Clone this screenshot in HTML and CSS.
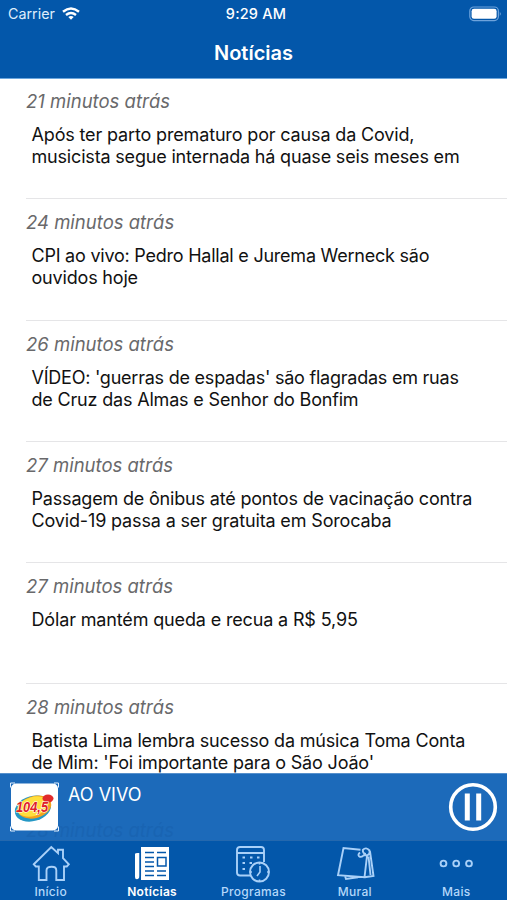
FILE: index.html
```html
<!DOCTYPE html>
<html lang="pt-BR">
<head>
<meta charset="utf-8">
<title>Notícias</title>
<link rel="stylesheet" href="styles.css">
</head>
<body>
<div class="app">
  <header class="header">
    <div class="status">
      <div class="carrier"><span>Carrier</span>
        <svg width="18" height="13" viewBox="0 0 18 13"><g fill="none" stroke="#fff" stroke-width="2.4"><path d="M1 4.7Q9-1.9 17 4.7"/><path d="M4 8Q9 4 14 8"/></g><path d="M6.3 10Q9 8 11.7 10L9 12.8z" fill="#fff"/></svg>
      </div>
      <div class="clock">9:29 AM</div>
      <svg class="battery" width="33" height="16" viewBox="0 0 33 16"><rect x=".8" y="1" width="28.6" height="13.6" rx="4" fill="none" stroke="#6ea3dc" stroke-width="1.2"/><rect x="2.6" y="2.8" width="25" height="10" rx="2.4" fill="#fff"/><path d="M30.8 5.5q1.8 2.2 0 4.4z" fill="#7fb0e4"/></svg>
    </div>
    <h1 class="title">Notícias</h1>
  </header>
  <main class="feed">
    <article class="item"><time class="time">21 minutos atrás</time><p class="text loose">Após ter parto prematuro por causa da Covid,<br><span class="snug">musicista segue internada há quase seis meses em</span></p></article>
    <article class="item"><time class="time">24 minutos atrás</time><p class="text"><span class="tight">CPI ao vivo: Pedro Hallal e Jurema Werneck são</span><br>ouvidos hoje</p></article>
    <article class="item"><time class="time">26 minutos atrás</time><p class="text"><span class="tight">VÍDEO: 'guerras de espadas' são flagradas em ruas</span><br>de Cruz das Almas e Senhor do Bonfim</p></article>
    <article class="item"><time class="time">27 minutos atrás</time><p class="text">Passagem de ônibus até pontos de vacinação contra<br><span class="loose">Covid-19 passa a ser gratuita em Sorocaba</span></p></article>
    <article class="item"><time class="time">27 minutos atrás</time><p class="text loose">Dólar mantém queda e recua a R$ 5,95</p></article>
    <article class="item"><time class="time">28 minutos atrás</time><p class="text">Batista Lima lembra sucesso da música Toma Conta<br>de Mim: 'Foi importante para o São João'</p></article>
  </main>
  <section class="player">
    <svg class="logo" width="50" height="50" viewBox="0 0 50 50">
      <rect x="2" y="1.5" width="47" height="47" rx="5" fill="#fff"/>
      <path d="M1.5 5.5V1H6M45 1H49.5V5.5M1.5 44.5V49H6M45 49H49.5V44.5" fill="none" stroke="#e4f1ff" stroke-width="1"/>
      <g transform="rotate(-16 24 25)"><ellipse cx="23.5" cy="26.5" rx="18.5" ry="12.5" fill="#2598c5"/><ellipse cx="25.5" cy="25.5" rx="17" ry="11" fill="#f4a21c"/><ellipse cx="24" cy="24.5" rx="16" ry="9.5" fill="#ffdf3c"/></g>
      <ellipse cx="39" cy="16.5" rx="5.5" ry="4" fill="#e12b2b"/>
      <text x="7" y="29.5" textLength="32" lengthAdjust="spacingAndGlyphs" class="logo-text">104,5</text>
    </svg>
    <span class="live">AO VIVO</span>
    <span class="ghost" aria-hidden="true">28 minutos atrás</span>
    <svg class="pause" width="50" height="50" viewBox="0 0 50 50" fill="none" stroke="#fff"><circle cx="25" cy="25" r="22.3" stroke-width="3.6"/><path d="M19.3 11.5V38.5M30.7 11.5V38.5" stroke-width="5"/></svg>
  </section>
  <nav class="tabs">
    <a class="tab"><svg width="40" height="40" viewBox="0 0 40 40"><path d="M2.8 21.3L20.3 4L27 10.2V6.8H32V15.2L37.8 21.3L35.8 23.5H33V37H25.3V27.2Q25.3 23.8 20.7 23.8Q15.5 23.8 15.5 27.2V37H7.8V23.5H4.8Z"/></svg><span>Início</span></a>
    <a class="tab active"><svg width="40" height="40" viewBox="0 0 40 40"><path d="M9 4H37V37H9z" fill="#fff" stroke="none"/><path d="M7.5 10V35.5Q3 37.5 3 34V11Q3 9.5 7.5 10z" fill="#fff" stroke="none"/><path class="cut" d="M8.3 9V33Q8.3 36 6 37M13 9.5H22M25 9.5H34M13 14.5H22M13 19H22M13 23.5H22M13 28H22M13 32.5H22M25 28H34M25 32.5H34M25.5 14.5H34V23H25.5z"/></svg><span>Notícias</span></a>
    <a class="tab"><svg width="40" height="40" viewBox="0 0 40 40"><path d="M17.5 32.5H7Q4 32.5 4 29.5V7Q4 4 7 4H28Q31 4 31 7V19M4 10H31"/><circle cx="26.5" cy="29" r="9.5"/><path d="M27 23V29L24 33M26.5 20V21.5M26.5 36.5V38M17.5 29H19M34 29H35.5" stroke-width="1.6"/><path d="M9.5 14.5H12M17 14.5H19.5M24 14.5H26.5M9.5 20H12M16.5 20H19M9.5 26H12" stroke-width="2"/></svg><span>Programas</span></a>
    <a class="tab"><svg width="40" height="40" viewBox="0 0 40 40"><path d="M25.5 6.8L8.5 5L3 32.2L29.5 34.3L32 13 M35 8.5L38.5 33L29.5 34.3M10 33L11 36L23 34.3M33.5 13.5L35.5 32M25 9.5Q22.5 11.5 24 13.2Q26.5 15 29 12L32.5 12.3Q35.5 10.5 34.5 7.5Q31 3.5 27.8 7Q27.8 11 31 11"/></svg><span>Mural</span></a>
    <a class="tab"><svg width="40" height="40" viewBox="0 0 40 40"><circle cx="7.5" cy="20.5" r="2.9"/><circle cx="20.2" cy="20.5" r="2.9"/><circle cx="33" cy="20.5" r="2.9"/></svg><span>Mais</span></a>
  </nav>
</div>
</body>
</html>
```
FILE: styles.css
```css
* { box-sizing: border-box; }
body { margin: 0; background: #fff; font-family: Inter, sans-serif; }
.app { width: 507px; height: 900px; display: flex; flex-direction: column; overflow: hidden; }
.header { flex: 0 0 79px; background: #0357aa; color: #fff; border-bottom: 1px solid #6ba6de; }
.status { display: grid; grid-template-columns: 1fr auto 1fr; align-items: center; height: 27px; padding: 0 5px 0 8px; font-size: 14.3px; }
.carrier { display: flex; align-items: center; gap: 7px; color: #deedfc; }
.clock { margin-left: 2px; font-weight: 500; font-size: 14.5px; letter-spacing: .2px; }
.battery { justify-self: end; }
.title { margin: 14px 0 0; text-align: center; font-size: 20px; line-height: 25px; font-weight: 600; }
.feed { flex: 1 1 0; min-height: 0; overflow: hidden; }
.item { height: 121.3px; margin-left: 26px; padding-top: 10px; border-bottom: 1px solid #e5e5e7; }
.item:first-child { height: 120.3px; padding-top: 9px; }
.time { display: block; font-size: 18.5px; line-height: 26px; font-style: italic; color: #69696b; }
.text { margin: 10px 0 0 5.5px; font-size: 18px; line-height: 22px; letter-spacing: -.18px; color: #111; white-space: nowrap; }
.tight { letter-spacing: -.23px; }
.snug { letter-spacing: -.18px; }
.loose { letter-spacing: -.15px; }
.player { position: relative; flex: 0 0 67px; display: flex; align-items: flex-start; padding: 8px 9px 0 9px; background: #1c6aba; border-top: 1px solid #5690cc; color: #fff; }
.logo { position: relative; z-index: 1; flex: none; }
.logo-text { font: italic 700 15px "Liberation Sans", sans-serif; fill: #df2027; stroke: #fff; stroke-width: 1.2px; paint-order: stroke; }
.live { margin: 1px 0 0 9px; font-size: 18px; line-height: 24px; }
.ghost { position: absolute; left: 26px; top: 43px; font-size: 18.5px; line-height: 26px; font-style: italic; color: #1964b2; }
.pause { margin-left: auto; }
.tabs { flex: 0 0 60px; display: grid; grid-template-columns: repeat(5, 1fr); background: #0357aa; color: #b4d7fa; border-top: 1px solid #2468ae; }
.tab { display: flex; flex-direction: column; align-items: center; padding-top: 2px; font-size: 12px; line-height: 17px; font-weight: 500; letter-spacing: .3px; }
.tab svg { fill: none; stroke: #a9d0f8; stroke-width: 1.9; flex: none; }
.tab .cut { stroke: #0357aa; stroke-width: 1.5; }
.tab.active { color: #fff; font-weight: 600; }
```
